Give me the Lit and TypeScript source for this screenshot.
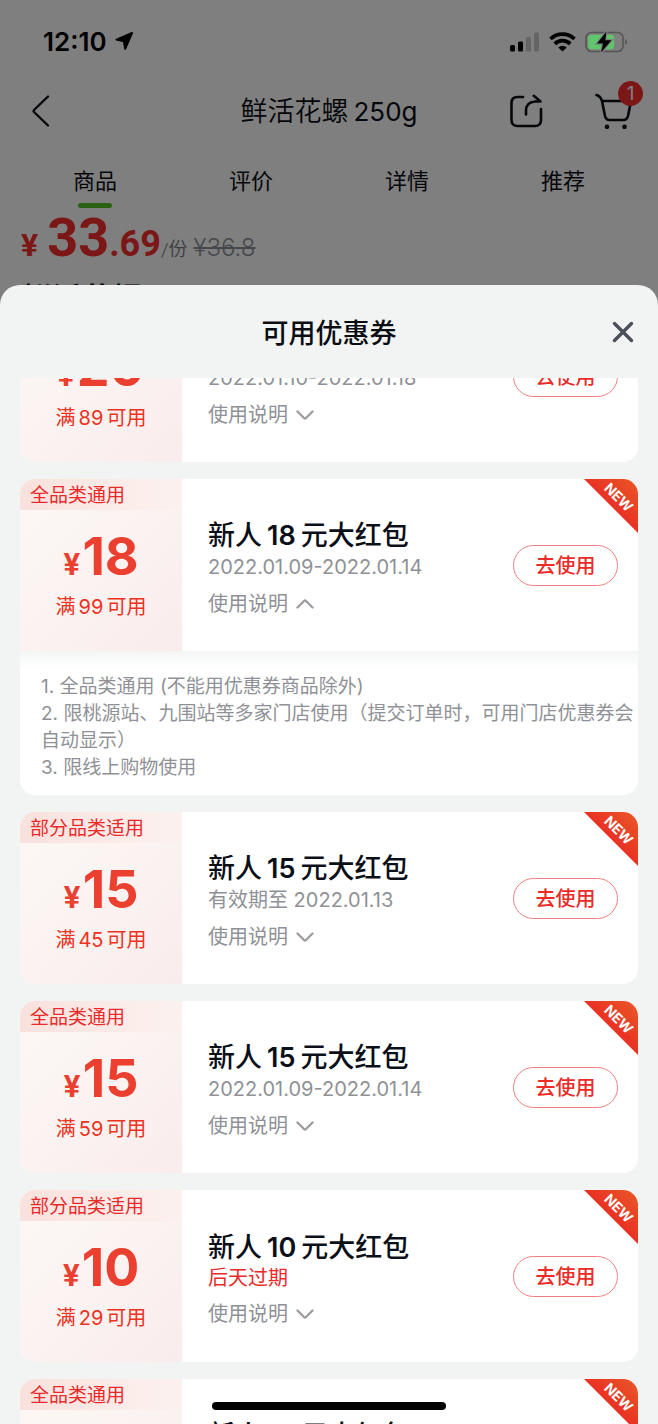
import { LitElement, html, css, nothing } from "lit";
import { customElement, property, state } from "lit/decorators.js";
import { classMap } from "lit/directives/class-map.js";

interface Coupon {
  scope: string;
  amount: number;
  minimum: number;
  validity: string;
  expiring?: boolean;
  isNew?: boolean;
  open?: boolean;
  notes: string[];
}

const COMMON_NOTES = [
  "1. 全品类通用 (不能用优惠券商品除外)",
  "2. 限桃源站、九围站等多家门店使用（提交订单时，可用门店优惠券会自动显示）",
  "3. 限线上购物使用",
];

const COUPONS: Coupon[] = [
  { scope: "全品类通用", amount: 20, minimum: 89, validity: "2022.01.10-2022.01.18", notes: COMMON_NOTES },
  { scope: "全品类通用", amount: 18, minimum: 99, validity: "2022.01.09-2022.01.14", isNew: true, open: true, notes: COMMON_NOTES },
  { scope: "部分品类适用", amount: 15, minimum: 45, validity: "有效期至 2022.01.13", isNew: true, notes: COMMON_NOTES },
  { scope: "全品类通用", amount: 15, minimum: 59, validity: "2022.01.09-2022.01.14", isNew: true, notes: COMMON_NOTES },
  { scope: "部分品类适用", amount: 10, minimum: 29, validity: "后天过期", expiring: true, isNew: true, notes: COMMON_NOTES },
  { scope: "全品类通用", amount: 10, minimum: 39, validity: "2022.01.09-2022.01.14", isNew: true, notes: COMMON_NOTES },
];

const reset = css`
  * {
    box-sizing: border-box;
    margin: 0;
    padding: 0;
  }
  button {
    border: 0;
    background: none;
    font: inherit;
    color: inherit;
    cursor: pointer;
  }
  a {
    color: inherit;
    text-decoration: none;
  }
  ul,
  ol {
    list-style: none;
  }
  svg {
    display: block;
  }
`;

@customElement("coupon-card")
export class CouponCard extends LitElement {
  static styles = [
    reset,
    css`
      :host {
        display: block;
        flex: none;
      }
      .card {
        position: relative;
        overflow: hidden;
        border-radius: 15px;
        background: #fff;
      }
      .main {
        display: flex;
        min-height: 172px;
      }
      .value {
        flex: none;
        width: 162px;
        background: linear-gradient(135deg, #fcf8f5 0%, #fbf3f1 50%, #f9ecec 100%);
        color: #eb3323;
      }
      .scope {
        padding: 2px 0 0 10px;
        font-size: 19px;
        line-height: 29px;
        color: #e92a2a;
        background: linear-gradient(90deg, #f9e1dd, #fbeeeb 75%, #fbf1ef);
        white-space: nowrap;
      }
      .amount {
        display: flex;
        justify-content: center;
        align-items: baseline;
        gap: 2px;
        margin-top: 17px;
        font-size: 52px;
        line-height: 60px;
        font-weight: 700;
        color: #eb4030;
      }
      .currency {
        font-size: 30px;
        line-height: 30px;
      }
      .minimum {
        margin-top: 6px;
        text-align: center;
        font-size: 20px;
        line-height: 28px;
      }
      .gap {
        margin: 0 3px;
      }
      .info {
        flex: 1;
        min-width: 0;
        padding: 5px 0 0 26px;
        display: flex;
        flex-direction: column;
        justify-content: center;
        align-items: flex-start;
        color: #8f9196;
        font-size: 20px;
        line-height: 26px;
      }
      .title {
        font-size: 27px;
        line-height: 36px;
        font-weight: 500;
        color: #0b0f18;
      }
      .title .gap {
        margin: 0 5px;
        font-weight: 600;
      }
      .expiring {
        line-height: 24px;
        color: #e92a2a;
      }
      .toggle {
        display: flex;
        align-items: center;
        gap: 8px;
        margin-top: 11px;
      }
      .flip {
        transform: scaleY(-1);
      }
      .use {
        flex: none;
        align-self: center;
        width: 105px;
        height: 41px;
        margin-right: 20px;
        padding-bottom: 1px;
        border: 1px solid #f08080;
        border-radius: 21px;
        font-size: 20px;
        font-weight: 500;
        color: #ea2b27;
      }
      .ribbon {
        position: absolute;
        top: 0;
        right: 0;
      }
      .ribbon text {
        font-size: 14px;
        font-weight: 700;
      }
      .notes {
        padding: 22px 0 14px 21px;
        font-size: 19px;
        line-height: 27px;
        color: #8f9196;
        background: linear-gradient(#f4f5f5, #fff) top / 100% 18px no-repeat;
      }
    `,
  ];

  @property({ attribute: false }) coupon!: Coupon;
  @state() private open = false;

  willUpdate(changed: Map<string, unknown>) {
    if (changed.has("coupon")) this.open = !!this.coupon.open;
  }

  private toggle() {
    this.open = !this.open;
  }

  render() {
    const c = this.coupon;
    return html`
      <article class="card">
        <div class="main">
          <div class="value">
            <p class="scope">${c.scope}</p>
            <p class="amount"><span class="currency">¥</span>${c.amount}</p>
            <p class="minimum">满<span class="gap">${c.minimum}</span>可用</p>
          </div>
          <div class="info">
            <h3 class="title">新人<span class="gap">${c.amount}</span>元大红包</h3>
            <p class=${classMap({ expiring: !!c.expiring })}>${c.validity}</p>
            <button class="toggle" aria-expanded=${this.open ? "true" : "false"} @click=${this.toggle}>
              使用说明
              <svg class=${classMap({ flip: this.open })} width="18" height="12" viewBox="0 0 18 12" fill="none"
                stroke="#9c9ea2" stroke-width="2.4" stroke-linecap="round" stroke-linejoin="round">
                <path d="M1.5 2.5 8 9Q9 10 10 9L16.5 2.5" />
              </svg>
            </button>
          </div>
          <button class="use">去使用</button>
        </div>
        ${this.open
          ? html`<ol class="notes">${c.notes.map((n) => html`<li>${n}</li>`)}</ol>`
          : nothing}
        ${c.isNew
          ? html`<svg class="ribbon" width="54" height="54" viewBox="0 0 54 54">
              <defs>
                <linearGradient id="r" x1="1" y1="0" x2="0.5" y2="0.5">
                  <stop offset="0" stop-color="#e95a28" />
                  <stop offset="1" stop-color="#e93123" />
                </linearGradient>
              </defs>
              <path d="M0 0H54V54Z" fill="url(#r)" />
              <text x="35" y="18" fill="#fff" text-anchor="middle" dominant-baseline="central"
                transform="rotate(45 35 18)">NEW</text>
            </svg>`
          : nothing}
      </article>
    `;
  }
}

@customElement("app-root")
export class AppRoot extends LitElement {
  static styles = [
    reset,
    css`
      :host {
        display: grid;
        grid-template: minmax(0, 1fr) / minmax(0, 1fr);
        position: relative;
        height: 100vh;
        overflow: hidden;
        background: #fff;
        color: #0b0d12;
        font-family: Inter, "Noto Sans CJK SC", sans-serif;
      }
      .page,
      .scrim,
      .status,
      .sheet {
        grid-area: 1 / 1;
        position: relative;
      }
      .page {
        isolation: isolate;
        padding-top: 76px;
      }
      .scrim {
        background: rgba(0, 0, 0, 0.5);
      }
      .status {
        align-self: start;
        display: flex;
        align-items: center;
        height: 83px;
        padding: 0 30px 0 43px;
        color: #000;
        font-size: 26px;
        font-weight: 600;
      }
      .status .arrow {
        margin: 0 auto 0 8px;
      }
      .status .wifi {
        margin: 0 9px;
      }
      .bar {
        display: grid;
        grid-template-columns: 1fr auto 1fr;
        align-items: center;
        height: 70px;
        padding: 0 24px;
      }
      .back {
        padding-left: 6px;
      }
      .bar-title {
        padding-bottom: 3px;
        font-size: 27px;
        font-weight: 350;
      }
      .bar-title .latin {
        margin-left: 5px;
        font-size: 26px;
        font-weight: 400;
      }
      .actions {
        display: flex;
        justify-content: flex-end;
        gap: 52px;
      }
      .cart {
        position: relative;
      }
      .badge {
        position: absolute;
        top: -12px;
        right: -9px;
        width: 25px;
        height: 25px;
        border-radius: 50%;
        background: #f62e2e;
        color: #fff;
        font-size: 19px;
        line-height: 25px;
        text-align: center;
      }
      .tabs {
        display: grid;
        grid-template-columns: repeat(4, 1fr);
        padding: 19px 17px 0;
        font-size: 22px;
        line-height: 32px;
        text-align: center;
      }
      .tab {
        display: flex;
        flex-direction: column;
        align-items: center;
        gap: 6px;
        padding-bottom: 5px;
      }
      .tab.current {
        padding-bottom: 0;
      }
      .tab.current::after {
        content: "";
        width: 34px;
        height: 5px;
        border-radius: 3px;
        background: #55c528;
      }
      .price {
        display: flex;
        align-items: baseline;
        padding: 0 21px;
        font-family: Roboto, "Noto Sans CJK SC", sans-serif;
        line-height: 24px;
        color: #f62e2e;
        font-weight: 700;
      }
      .price-sign {
        font-size: 32px;
        margin-right: 9px;
      }
      .price-main {
        font-size: 54px;
        line-height: 60px;
      }
      .price-cents {
        font-size: 36px;
      }
      .unit {
        font-size: 19px;
        font-weight: 350;
        color: #777a82;
      }
      .was {
        margin-left: 6px;
        font-family: Inter, sans-serif;
        font-size: 24px;
        font-weight: 300;
        color: #8c8f96;
      }
      .name {
        padding: 10px 22px;
        font-size: 30px;
        line-height: 40px;
        font-weight: 700;
      }
      .sheet {
        display: flex;
        flex-direction: column;
        min-height: 0;
        margin-top: 285px;
        border-radius: 20px 20px 0 0;
        background: #f2f4f4;
        overflow: hidden;
      }
      .sheet-head {
        flex: none;
        display: grid;
        grid-template-columns: 1fr auto 1fr;
        align-items: center;
        height: 93px;
        padding: 0 24px;
      }
      .sheet-title {
        grid-column: 2;
        padding-bottom: 1px;
        font-size: 27px;
        font-weight: 500;
      }
      .close {
        justify-self: end;
      }
      .list {
        flex: 1;
        min-height: 0;
        display: flex;
        flex-direction: column;
        gap: 17px;
        padding: 0 20px 34px;
        overflow-y: auto;
        scrollbar-width: none;
      }
      .home {
        position: absolute;
        left: 50%;
        bottom: 14px;
        width: 234px;
        height: 8px;
        margin-left: -117px;
        border-radius: 4px;
        background: #000;
      }
    `,
  ];

  private tabs = ["商品", "评价", "详情", "推荐"];

  firstUpdated() {
    const list = this.renderRoot.querySelector<HTMLElement>(".list")!;
    const cards = Array.from(list.querySelectorAll<CouponCard>("coupon-card"));
    Promise.all(cards.map((c) => c.updateComplete)).then(() => {
      list.scrollTop = 88;
    });
  }

  render() {
    return html`
      <main class="page">
        <header class="bar">
          <button class="back" aria-label="返回">
            <svg width="20" height="34" viewBox="0 0 20 34" fill="none" stroke="#0b0d12" stroke-width="2.4"
              stroke-linecap="round" stroke-linejoin="round">
              <path d="M18 2.500 4 16Q3 17 4 18L18 31.500" />
            </svg>
          </button>
          <h1 class="bar-title">鲜活花螺<span class="latin">250g</span></h1>
          <div class="actions">
            <button aria-label="分享">
              <svg width="34" height="34" viewBox="0 0 34 34" fill="none" stroke="#0b0d12" stroke-width="2.6"
                stroke-linecap="round" stroke-linejoin="round">
                <path d="M14 3H8.500Q2.500 3 2.500 9V26Q2.500 32 8.500 32H26Q32 32 32 26V15" />
                <path d="M17 20.500V17Q17 8 26 7.500H31.500L24.800 1.800" />
              </svg>
            </button>
            <button class="cart" aria-label="购物车">
              <svg width="39" height="36" viewBox="0 0 39 36" fill="none" stroke="#0b0d12" stroke-width="2.6"
                stroke-linecap="round" stroke-linejoin="round">
                <path d="M1.500 2Q5.500 3 7 8L10 23Q11 27 14.500 27H28.500Q32 27 33 23L36 8H7" />
                <circle cx="12" cy="33.800" r="1" />
                <circle cx="29.500" cy="33.800" r="1" />
              </svg>
              <span class="badge">1</span>
            </button>
          </div>
        </header>
        <nav class="tabs">
          ${this.tabs.map((t, i) => html`<a href="#" class=${classMap({ tab: true, current: i === 0 })}>${t}</a>`)}
        </nav>
        <p class="price">
          <span class="price-sign">¥</span><span class="price-main">33</span><span class="price-cents">.69</span>
          <span class="unit">/份</span><s class="was">¥36.8</s>
        </p>
        <h2 class="name">鲜活花螺</h2>
      </main>
      <div class="scrim"></div>
      <div class="status">
        <span>12:10</span>
        <svg class="arrow" width="19" height="19" viewBox="0 0 19 19">
          <path d="M1.500 7.600 17 1 10.200 16.800 8.800 9.400Z" fill="#000" stroke="#000" stroke-width="2" stroke-linejoin="round" />
        </svg>
        <svg width="30" height="20" viewBox="0 0 30 20">
          <rect x="0" y="13" width="5" height="6.500" rx="1.500" />
          <rect x="8" y="9.500" width="5" height="10" rx="1.500" />
          <rect x="16" y="5" width="5" height="14.500" rx="1.500" fill="#656565" />
          <rect x="24" y="0.500" width="5" height="19" rx="1.500" fill="#656565" />
        </svg>
        <svg class="wifi" width="27" height="20" viewBox="0 0 27 20" fill="none" stroke="#000" stroke-width="3.800">
          <path d="M1.500 6.800A17.500 17.500 0 0 1 25.500 6.800" />
          <path d="M5.800 11.800A10.900 10.900 0 0 1 21.200 11.800" />
          <path d="M13.500 19.600 9.300 15.400A6 6 0 0 1 17.700 15.400Z" fill="#000" stroke="none" />
        </svg>
        <svg width="43" height="22" viewBox="0 0 43 22">
          <rect x="1" y="1.500" width="37" height="19" rx="5.500" fill="none" stroke="#555" stroke-width="1.600" />
          <rect x="3.200" y="3.800" width="26" height="14.400" rx="3.500" fill="#5fc66b" />
          <path d="M40 8Q42 9 42 11T40 14Z" fill="#555" />
          <path d="M21.500 0.500 12 12.500H18L16 21.500 26.500 9.200H20.300Z" fill="#000" stroke="#808080" stroke-width="2.400" paint-order="stroke" />
        </svg>
      </div>
      <section class="sheet" role="dialog" aria-label="可用优惠券">
        <header class="sheet-head">
          <h2 class="sheet-title">可用优惠券</h2>
          <button class="close" aria-label="关闭">
            <svg width="22" height="22" viewBox="0 0 22 22" fill="none" stroke="#4a4f59" stroke-width="3.400"
              stroke-linecap="round">
              <path d="M2.500 2.500 19.500 19.500M19.500 2.500 2.500 19.500" />
            </svg>
          </button>
        </header>
        <div class="list">
          ${COUPONS.map((c) => html`<coupon-card .coupon=${c}></coupon-card>`)}
        </div>
      </section>
      <div class="home"></div>
    `;
  }
}
